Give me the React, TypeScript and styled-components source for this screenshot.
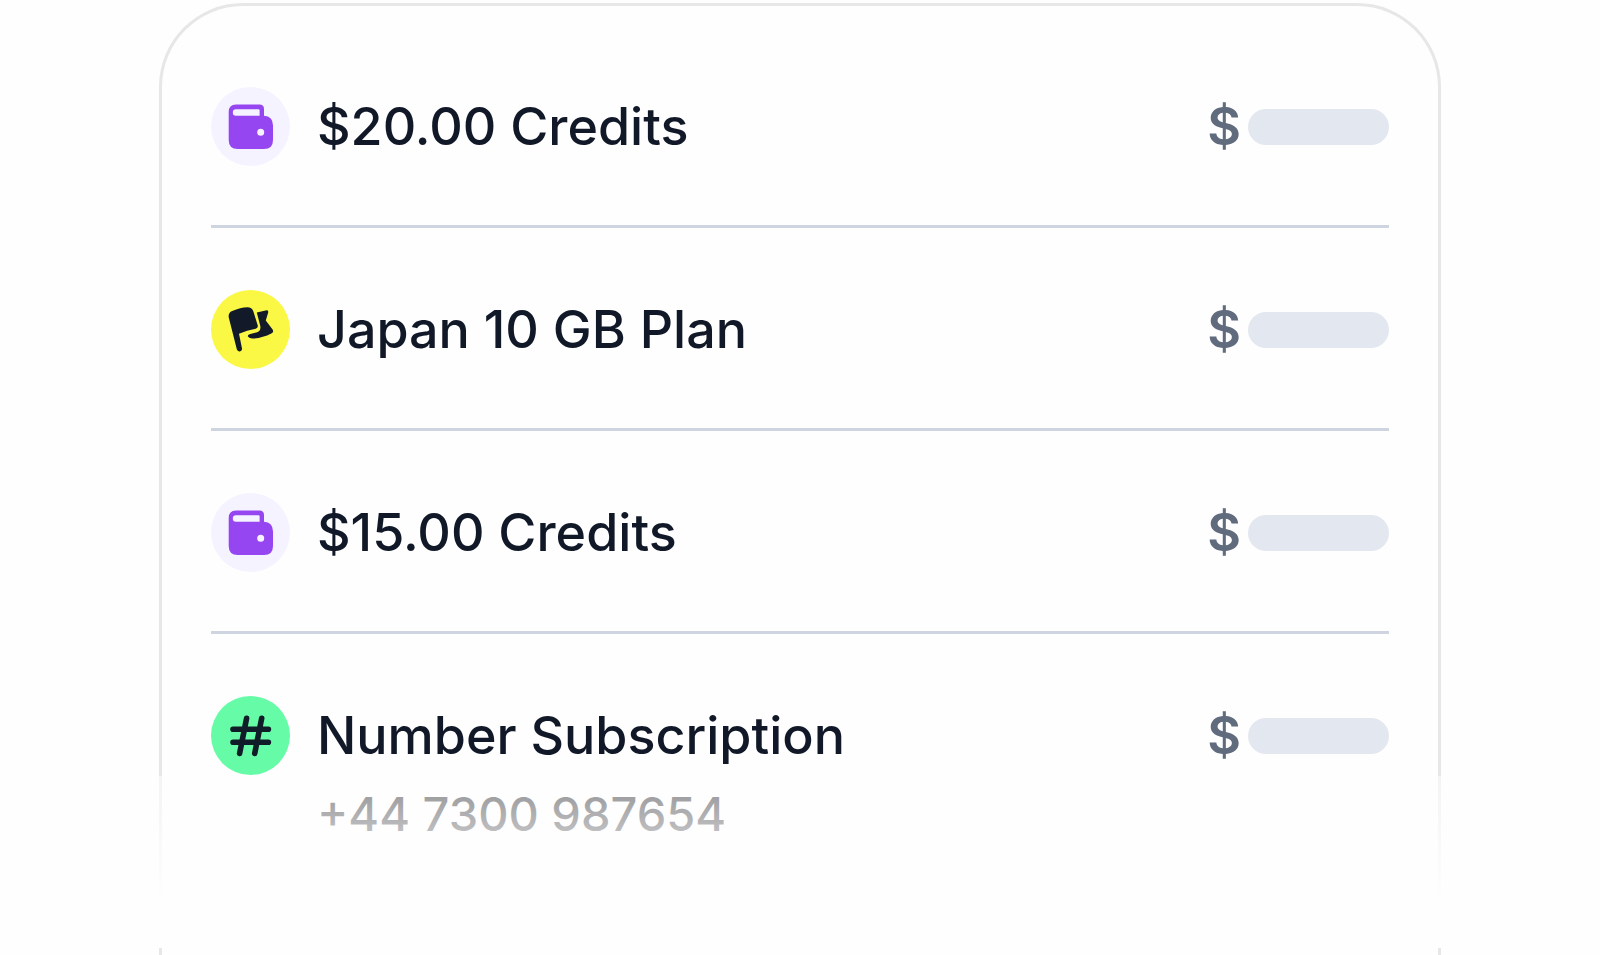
import React from 'react';
import styled, { createGlobalStyle } from 'styled-components';

const GlobalStyle = createGlobalStyle`
  *, *::before, *::after { box-sizing: border-box; }
  body {
    margin: 0;
    background: #fefefe;
    font-family: Inter, "Liberation Sans", sans-serif;
  }
`;

const Page = styled.main`
  display: flex;
  flex-direction: column;
  min-height: 100vh;
  padding: 3px 159px 0;
`;

const Card = styled.section`
  position: relative;
  flex: 1;
  padding: 19px 49px 0;
  border: 3px solid #e7e7e7;
  border-bottom: 0;
  border-radius: 84px 84px 0 0;
  background: #fefefe;
`;

const List = styled.ul`
  margin: 0;
  padding: 0;
  list-style: none;
`;

const Row = styled.li`
  display: grid;
  grid-template-columns: 79px 1fr auto;
  column-gap: 27px;
  align-items: center;
  padding: 62px 0 59px;
  border-bottom: 3px solid #ced5e1;

  &:last-child {
    padding-bottom: 48px;
    border-bottom: 0;
  }
`;

const Badge = styled.span<{ $color: string }>`
  display: flex;
  width: 79px;
  height: 79px;
  border-radius: 50%;
  background: ${(p) => p.$color};

  svg {
    width: 100%;
    height: 100%;
  }
`;

const Title = styled.span`
  font-size: 52px;
  line-height: 64px;
  font-weight: 500;
  color: #111827;
`;

const Amount = styled.span`
  display: flex;
  align-items: center;
  gap: 7px;
  font-size: 52px;
  line-height: 64px;
  font-weight: 600;
  color: #616b7e;
`;

const HiddenValue = styled.span`
  width: 141px;
  height: 36px;
  border-radius: 18px;
  background: #e3e8f0;
`;

const Detail = styled.span`
  grid-column: 2 / -1;
  margin-top: 10px;
  font-size: 47px;
  line-height: 58px;
  font-weight: 500;
  color: #05060c;
`;

const Fade = styled.div`
  position: absolute;
  right: -3px;
  bottom: 7px;
  left: -3px;
  height: 172px;
  background: linear-gradient(rgba(254, 254, 254, 0.55), #fefefe 75%);
`;

const WalletIcon = () => (
  <svg viewBox="0 0 79 79" aria-hidden="true">
    <path
      fill="#9546f0"
      fillRule="evenodd"
      d="M25 17.5H48.5Q53 17.5 53 22V28.7Q62 29.2 62 38.5V53Q62 62 53 62H26.7Q17.7 62 17.7 53V25Q17.7 17.5 25 17.5ZM25 22.3Q21.8 22.3 21.8 25.5T25 28.7H48.6V23.3Q48.6 22.3 47.6 22.3ZM49.7 41.8A3.5 3.5 0 1 0 49.7 48.8A3.5 3.5 0 1 0 49.7 41.8Z"
    />
  </svg>
);

const FlagIcon = () => (
  <svg viewBox="0 0 79 79" aria-hidden="true" fill="#121a29">
    <path d="M17.7 27.2Q17.1 22.8 21.2 21.1Q29.5 17.6 36.3 17.3Q41 17.3 42.3 21.3L46.7 35.2Q47.3 38 44.7 38.7Q36 40 28 43.8L31 58.6Q31.3 61 28.9 61.4Q26.4 61.7 25.8 59.3Z" />
    <path d="M45.8 22.6L54.6 20.4Q58 20 57.1 22.7L54.8 30.4L61.6 39.6Q63.2 42.3 60.3 43.4Q51.5 47.9 41.8 48.5Q38.3 48.6 36.9 46.4Q36.5 44.8 38.5 44.2L45.4 42.5Q50.2 41 49.3 36Z" />
  </svg>
);

const HashIcon = () => (
  <svg viewBox="0 0 79 79" aria-hidden="true">
    <path
      fill="none"
      stroke="#101c28"
      strokeWidth="5.6"
      strokeLinecap="round"
      d="M35.6 22.3L28.6 57.5M50.7 22.3L43.7 57.5M22 33.3H57.4M22 46.2H57.4"
    />
  </svg>
);

const badges = {
  wallet: { color: '#f5f3ff', Icon: WalletIcon },
  flag: { color: '#faf845', Icon: FlagIcon },
  hash: { color: '#66fba6', Icon: HashIcon },
};

type Purchase = { badge: keyof typeof badges; title: string; detail?: string };

const purchases: Purchase[] = [
  { badge: 'wallet', title: '$20.00 Credits' },
  { badge: 'flag', title: 'Japan 10 GB Plan' },
  { badge: 'wallet', title: '$15.00 Credits' },
  { badge: 'hash', title: 'Number Subscription', detail: '+44 7300 987654' },
];

export default function App() {
  return (
    <>
      <GlobalStyle />
      <Page>
        <Card>
          <List>
            {purchases.map(({ badge, title, detail }) => {
              const { color, Icon } = badges[badge];
              return (
                <Row key={title}>
                  <Badge $color={color}>
                    <Icon />
                  </Badge>
                  <Title>{title}</Title>
                  <Amount>
                    $<HiddenValue />
                  </Amount>
                  {detail && <Detail>{detail}</Detail>}
                </Row>
              );
            })}
          </List>
          <Fade />
        </Card>
      </Page>
    </>
  );
}
